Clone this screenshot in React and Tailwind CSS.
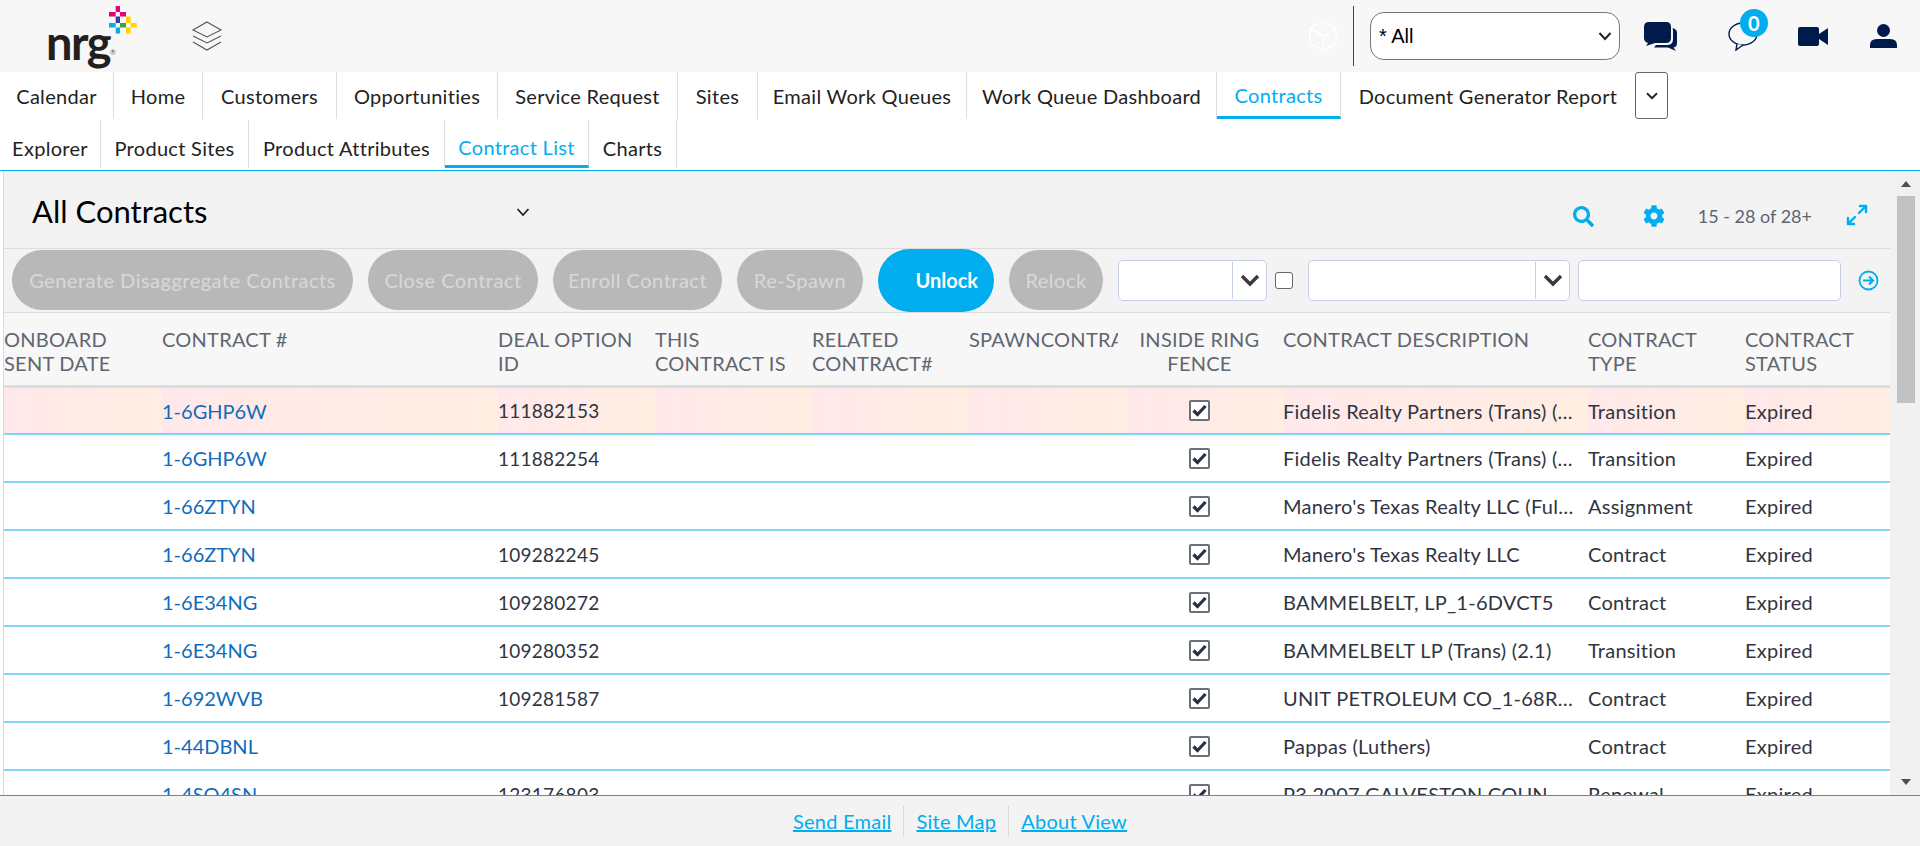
import React from "react";
import { Maximize2, ChevronDown } from "lucide-react";
import { FaSearch, FaCog } from "react-icons/fa";

const tabs = [
  ["Calendar", 114], ["Home", 89], ["Customers", 134], ["Opportunities", 161], ["Service Request", 180],
  ["Sites", 80], ["Email Work Queues", 209], ["Work Queue Dashboard", 250], ["Contracts", 124], ["Document Generator Report", 294],
];
const subTabs = [["Explorer", 101], ["Product Sites", 148], ["Product Attributes", 196], ["Contract List", 144], ["Charts", 88]];

const cols = [158, 336, 157, 157, 157, 158, 156, 305, 157, 145];
const headers = [
  ["ONBOARD", "SENT DATE"], ["CONTRACT #"], ["DEAL OPTION", "ID"], ["THIS", "CONTRACT IS"], ["RELATED", "CONTRACT#"],
  ["SPAWNCONTRACT"], ["INSIDE RING", "FENCE"], ["CONTRACT DESCRIPTION"], ["CONTRACT", "TYPE"], ["CONTRACT", "STATUS"],
];
const rows = [
  ["1-6GHP6W", "111882153", "Fidelis Realty Partners (Trans) (2.1)", "Transition"],
  ["1-6GHP6W", "111882254", "Fidelis Realty Partners (Trans) (2.2)", "Transition"],
  ["1-66ZTYN", "", "Manero's Texas Realty LLC (Full Assignment)", "Assignment"],
  ["1-66ZTYN", "109282245", "Manero's Texas Realty LLC", "Contract"],
  ["1-6E34NG", "109280272", "BAMMELBELT, LP_1-6DVCT5", "Contract"],
  ["1-6E34NG", "109280352", "BAMMELBELT LP (Trans) (2.1)", "Transition"],
  ["1-692WVB", "109281587", "UNIT PETROLEUM CO_1-68RXYZ_Contract", "Contract"],
  ["1-44DBNL", "", "Pappas (Luthers)", "Contract"],
  ["1-4SQ4SN", "123176803", "P3 2007 GALVESTON COUNTY LLC", "Renewal"],
];

function Check() {
  return (
    <span className="inline-flex items-center justify-center w-[21px] h-[21px] border-2 border-[#6b6f7a] bg-white rounded-[2px]">
      <svg width="15" height="13" viewBox="0 0 15 13"><path d="M1.5 6.5 5.5 10.5 13.5 2" fill="none" stroke="#2a3044" strokeWidth="3.2" /></svg>
    </span>
  );
}

function Cell({ w, first, children, className = "" }) {
  return (
    <div
      style={{ width: w }}
      className={`shrink-0 h-full pr-[14px] ${first ? "pt-[1px] bg-gradient-to-r from-[#ffe8ea] to-[#ffeee2]" : "pt-[2px]"} flex items-center overflow-hidden ${className}`}
    >
      <div className="w-full truncate">{children}</div>
    </div>
  );
}

function Combo({ w }) {
  return (
    <div style={{ width: w }} className="h-[41px] shrink-0 flex bg-white border border-[#c5d0e6] rounded-[5px]">
      <div className="flex-1 border-r border-[#c5d0e6] my-[1px]" />
      <div className="w-[33px] flex items-center justify-center">
        <svg width="20" height="14" viewBox="0 0 20 14"><path d="M2 3 10 11 18 3" fill="none" stroke="#3a3a3a" strokeWidth="3.4" /></svg>
      </div>
    </div>
  );
}

function Btn({ w, ml, children }) {
  return (
    <div style={{ width: w, marginLeft: ml }} className="h-[60px] shrink-0 rounded-[30px] bg-[#b8b8b8] text-[#d8d8d8] tracking-[0.5px] flex items-center justify-center">
      {children}
    </div>
  );
}

export default function App() {
  return (
    <div className="w-[1920px] h-[846px] overflow-hidden flex flex-col bg-white font-['Lato',sans-serif] text-[20px] tracking-[0.25px] text-[#222]">
      {/* top bar */}
      <div className="h-[72px] shrink-0 bg-[#f7f7f7] flex items-center">
        <div className="relative w-[140px] h-[72px] shrink-0">
          <span className="absolute left-[46px] top-[17px] text-[47px] leading-[50px] font-bold tracking-[-1.5px] text-[#231f20]">nrg</span>
          <span className="absolute left-[110px] top-[48px] text-[7px] leading-[8px] text-[#555]">®</span>
          <svg className="absolute left-[109px] top-[6px]" width="28" height="28" viewBox="0 0 28 28">
            <rect x="6.700" y="0" width="4.300" height="6" fill="#e6007e" />
            <rect x="0" y="6" width="6.700" height="4.500" fill="#e6007e" />
            <rect x="11" y="6" width="6" height="4.500" fill="#e6007e" />
            <rect x="6.700" y="10.500" width="4.300" height="6.500" fill="#3a3a9c" />
            <rect x="0" y="17" width="6.700" height="4.500" fill="#00aeef" />
            <rect x="11" y="17" width="6" height="4.500" fill="#3aa535" />
            <rect x="6.700" y="21.500" width="4.300" height="6" fill="#00aeef" />
            <rect x="17" y="10.500" width="4.700" height="6.500" fill="#ffd400" />
            <rect x="21.700" y="17" width="6" height="4.500" fill="#ffd400" />
            <rect x="17" y="21.500" width="4.700" height="6" fill="#ffd400" />
          </svg>
        </div>
        <svg className="ml-[51px] shrink-0" width="32" height="30" viewBox="0 0 32 30" fill="none" stroke="#555" strokeWidth="1.1">
          <path d="M16 1 30 9 16 16 2 9Z" />
          <path d="M2 15 16 22 30 15" />
          <path d="M2 21 16 29 30 21" />
        </svg>
        <div className="flex-1" />
        <svg className="mr-[15px] shrink-0" width="30" height="32" viewBox="0 0 30 32" fill="none" stroke="#fff" strokeWidth="1.5">
          <path d="M15 1 28 8.500V23.500L15 31 2 23.500V8.500Z" />
          <path d="M2 8.500 15 16 28 8.500M15 16V31" />
        </svg>
        <div className="w-px h-[60px] bg-[#444] shrink-0" />
        <div className="ml-[16px] w-[250px] h-[48px] shrink-0 rounded-[14px] border border-[#767676] bg-white flex items-center justify-between pl-[8px] pr-[7px] font-['Liberation_Sans',sans-serif] text-[20px] tracking-normal text-black">
          <span>* All</span>
          <svg width="14" height="10" viewBox="0 0 14 10"><path d="M1.5 2 7 8 12.5 2" fill="none" stroke="#222" strokeWidth="2" /></svg>
        </div>
        {/* chat filled */}
        <svg className="ml-[24px] shrink-0" width="33" height="29" viewBox="0 0 33 29">
          <path d="M5 0H22Q27 0 27 5V16Q27 21 22 21H11L2 24 4 21Q0 20 0 16V5Q0 0 5 0Z" fill="#001a4b" />
          <path d="M28.500 6Q33 7 33 11V21Q33 25 29.500 25.500L32 29 24 25.500H10L12 23H23Q29 23 29 17V9Q29 7 28.500 6Z" fill="#001a4b" />
        </svg>
        {/* chat outline with badge */}
        <div className="relative ml-[51px] w-[30px] h-[30px] shrink-0">
          <svg width="30" height="30" viewBox="0 0 30 30" fill="none" stroke="#001a4b" strokeWidth="1.4">
            <ellipse cx="15" cy="13" rx="14" ry="11" />
            <path d="M9 23 8 29 15 24" fill="#f7f7f7" />
          </svg>
          <div className="absolute left-[12px] top-[-12px] w-[28px] h-[28px] rounded-full bg-[#00aeef] text-white text-[20px] font-bold flex items-center justify-center">0</div>
        </div>
        {/* video */}
        <svg className="ml-[40px] shrink-0" width="30" height="19" viewBox="0 0 30 19">
          <rect x="0" y="0" width="21" height="19" rx="2" fill="#001a4b" />
          <path d="M21 7 30 1V18L21 12Z" fill="#001a4b" />
        </svg>
        {/* user */}
        <svg className="ml-[42px] mr-[23px] shrink-0" width="27" height="24" viewBox="0 0 27 24">
          <circle cx="13.500" cy="6.500" r="6.500" fill="#001a4b" />
          <path d="M0 24V21Q0 15 7 15H20Q27 15 27 21V24Z" fill="#001a4b" />
        </svg>
      </div>

      {/* primary tabs */}
      <div className="h-[48px] shrink-0 flex tracking-[0.3px]">
        {tabs.map(([t, w], i) => {
          const active = t === "Contracts";
          return (
            <div key={t} style={{ width: w }} className={`h-[47px] shrink-0 flex items-center justify-center whitespace-nowrap pt-[1px] ${i < 9 ? "border-r border-[#d9dee5]" : ""} ${active ? "border-b-[3px] border-b-[#00aeef] text-[#00aeef]" : ""}`}>
              {t}
            </div>
          );
        })}
        <div className="w-[33px] h-[47px] shrink-0 rounded-[3px] border border-[#666] flex items-center justify-center">
          <ChevronDown size={18} strokeWidth={2.4} color="#222" />
        </div>
      </div>

      {/* secondary tabs */}
      <div className="h-[51px] shrink-0 flex border-b border-[#00aeef] tracking-[0.3px]">
        {subTabs.map(([t, w]) => {
          const active = t === "Contract List";
          return (
            <div key={t} style={{ width: w }} className={`h-[48px] shrink-0 flex items-center justify-center whitespace-nowrap pt-[8px] border-r border-[#d9dee5] ${active ? "border-b-[3px] border-b-[#00aeef] text-[#00aeef]" : ""}`}>
              {t}
            </div>
          );
        })}
      </div>

      {/* main */}
      <div className="flex-1 min-h-0 flex">
        <div className="w-[4px] shrink-0 bg-white border-r border-[#dcdcdc]" />
        <div className="w-[1886px] shrink-0 flex flex-col overflow-hidden">
          <div className="h-[78px] shrink-0 bg-[#f3f3f3] flex items-center border-b border-[#dcdcdc]">
            <span className="ml-[28px] mt-[3px] text-[31px] tracking-normal text-black">All Contracts</span>
            <svg className="ml-[309px] mt-[4px]" width="14" height="10" viewBox="0 0 14 10"><path d="M1.5 2 7 8 12.5 2" fill="none" stroke="#222" strokeWidth="1.8" /></svg>
            <div className="flex-1" />
            <FaSearch className="mt-[13px] text-[#00aeef]" size={21} />
            <FaCog className="ml-[49px] mt-[13px] text-[#00aeef]" size={22} />
            <span className="ml-[33px] mt-[13px] text-[18px] tracking-normal text-[#5d6570]">15 - 28 of 28+</span>
            <Maximize2 className="ml-[33px] mr-[21px] mt-[11px] text-[#00aeef]" size={24} strokeWidth={2.4} />
          </div>
          <div className="h-[64px] shrink-0 bg-[#f3f3f3] border-b border-[#dcdcdc] flex items-center pb-[1px]">
            <Btn w={341} ml={8}>Generate Disaggregate Contracts</Btn>
            <Btn w={170} ml={15}>Close Contract</Btn>
            <Btn w={169} ml={15}>Enroll Contract</Btn>
            <Btn w={126} ml={15}>Re-Spawn</Btn>
            <div className="ml-[15px] w-[116px] h-[63px] shrink-0 rounded-[32px] bg-[#00aeef] text-white font-bold tracking-normal flex items-center justify-end pr-[16px]">Unlock</div>
            <Btn w={94} ml={15}>Relock</Btn>
            <div className="ml-[15px] flex items-center">
              <Combo w={149} />
              <span className="ml-[8px] w-[18px] h-[17px] rounded-[3px] border border-[#666] bg-white" />
              <div className="ml-[15px]"><Combo w={262} /></div>
              <div className="ml-[8px] w-[263px] h-[41px] bg-white border border-[#c5d0e6] rounded-[5px]" />
              <svg className="ml-[17px]" width="21" height="21" viewBox="0 0 21 21" fill="none" stroke="#00aeef" strokeWidth="1.8">
                <circle cx="10.500" cy="10.500" r="9" />
                <path d="M5 10.500H15M11 6.500 15 10.500 11 14.500" strokeWidth="2.2" />
              </svg>
            </div>
          </div>
          <div className="h-[75px] shrink-0 bg-[#f7f7f7] flex border-b-[3px] border-[#dddddd] text-[#5f6670] leading-[24px] pt-[14px]">
            {headers.map((h, i) => (
              <div key={i} style={{ width: cols[i] }} className={`shrink-0 whitespace-nowrap ${i === 6 ? "text-center pr-[11px]" : ""} ${i === 5 ? "pr-[9px]" : ""}`}>
                <div className="overflow-hidden">
                  {h.map((l) => <div key={l}>{l}</div>)}
                </div>
              </div>
            ))}
          </div>
          <div className="flex-1 min-h-0 overflow-hidden">
            {rows.map((r, i) => (
              <div key={i} className={`${i === 0 ? "h-[47px]" : "h-[48px]"} flex border-b-2 border-[#7fd6f7] text-[#2f3542] ${i === 0 ? "bg-[#ffece5]" : "bg-white"}`}>
                <Cell w={cols[0]} first={i === 0} />
                <Cell w={cols[1]} first={i === 0} className="!pt-0"><span className="text-[#0f6cbd] tracking-normal">{r[0]}</span></Cell>
                <Cell w={cols[2]} first={i === 0} className="!pt-0"><span className="text-[19px]">{r[1]}</span></Cell>
                <Cell w={cols[3]} first={i === 0} />
                <Cell w={cols[4]} first={i === 0} />
                <Cell w={cols[5]} first={i === 0} />
                <Cell w={cols[6]} first={i === 0} className="text-center !pr-[11px] !pt-0 pb-[3px]"><Check /></Cell>
                <Cell w={cols[7]} first={i === 0} className="!pt-0">{r[2]}</Cell>
                <Cell w={cols[8]} first={i === 0} className="!pt-0">{r[3]}</Cell>
                <Cell w={cols[9]} first={i === 0} className="!pt-0">Expired</Cell>
              </div>
            ))}
          </div>
        </div>
        {/* scrollbar */}
        <div className="w-[30px] shrink-0 bg-[#f1f1f1] flex">
          <div className="ml-[7px] w-[18px] flex flex-col items-center">
            <svg className="mt-[9px] shrink-0" width="12" height="8" viewBox="0 0 12 8"><path d="M6 1 11 7H1Z" fill="#505050" /></svg>
            <div className="mt-[8px] w-full h-[207px] bg-[#c1c1c1] shrink-0" />
            <div className="flex-1" />
            <svg className="mb-[9px] shrink-0" width="12" height="8" viewBox="0 0 12 8"><path d="M1 1H11L6 7Z" fill="#505050" /></svg>
          </div>
        </div>
      </div>

      {/* footer */}
      <div className="h-[51px] shrink-0 bg-[#f3f3f3] border-t border-[#1e9fd6] flex items-center justify-center text-[#00aeef]">
        <span className="underline pr-[12px] border-r border-[#d9d9d9]">Send Email</span>
        <span className="underline px-[12px] border-r border-[#d9d9d9]">Site Map</span>
        <span className="underline pl-[12px]">About View</span>
      </div>
    </div>
  );
}
